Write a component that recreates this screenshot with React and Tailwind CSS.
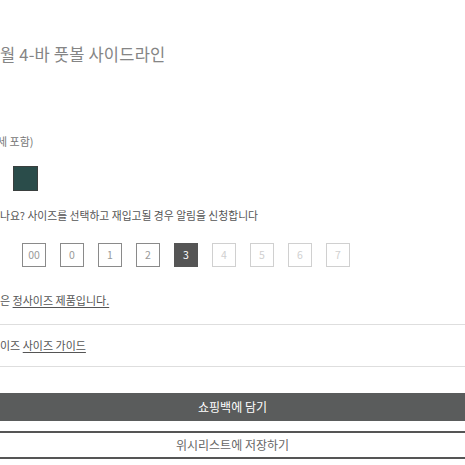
export default function App() {
  const sizes = [
    { label: '00', ok: true },
    { label: '0', ok: true },
    { label: '1', ok: true },
    { label: '2', ok: true },
    { label: '3', ok: true, selected: true },
    { label: '4', ok: false },
    { label: '5', ok: false },
    { label: '6', ok: false },
    { label: '7', ok: false },
  ];

  return (
    <div
      className="w-[465px] h-[465px] overflow-hidden bg-white flex flex-col"
      style={{ fontFamily: '"Noto Sans CJK KR", "Noto Sans", sans-serif' }}
    >
      {/* Title */}
      <div className="mt-[42px] h-6 leading-6 text-[16.5px] tracking-[0.2px] text-[#858585] whitespace-nowrap">
        월 4-바 풋볼 사이드라인
      </div>

      {/* Tax note */}
      <div className="mt-[67px] h-4 leading-4 text-[11px] text-[#777] whitespace-nowrap -ml-[3px]">
        세 포함)
      </div>

      {/* Colour swatch */}
      <div className="mt-[17px] ml-[13px] w-[25px] h-[25px] bg-[#2a4c4a] border border-[#3a3f3e]" />

      {/* Restock message */}
      <div className="mt-[16px] h-4 leading-4 text-[10.8px] text-[#555] whitespace-nowrap">
        나요? 사이즈를 선택하고 재입고될 경우 알림을 신청합니다
      </div>

      {/* Sizes */}
      <div className="mt-[20px] ml-[22px] flex gap-[14px]">
        {sizes.map((s) => (
          <div
            key={s.label}
            className={
              s.selected
                ? 'w-6 h-6 flex items-center justify-center text-[10.5px] bg-[#555] border border-[#555] text-white'
                : s.ok
                ? 'w-6 h-6 flex items-center justify-center text-[10.5px] border border-[#8a8a8a] text-[#999]'
                : 'w-6 h-6 flex items-center justify-center text-[10.5px] border border-[#d0d0d0] text-[#d0d0d0]'
            }
          >
            {s.label}
          </div>
        ))}
      </div>

      {/* Fit note */}
      <div className="mt-[25px] h-4 leading-4 text-[11px] text-[#555] whitespace-nowrap">
        은 <span className="underline underline-offset-2">정사이즈 제품입니다.</span>
      </div>

      <div className="mt-[16px] border-t border-[#dedede]" />

      {/* Size guide */}
      <div className="mt-[12px] h-4 leading-4 text-[11px] text-[#555] whitespace-nowrap">
        이즈 <span className="underline underline-offset-2">사이즈 가이드</span>
      </div>

      <div className="mt-[13px] border-t border-[#dedede]" />

      {/* Buttons */}
      <button className="mt-[26px] h-[28px] w-full bg-[#5a5c5c] text-white text-[12px] flex items-center justify-center">
        쇼핑백에 담기
      </button>
      <button className="mt-[10px] h-[28px] w-full bg-white border-y-2 border-[#555] text-[#666] text-[12px] flex items-center justify-center">
        위시리스트에 저장하기
      </button>
    </div>
  );
}
